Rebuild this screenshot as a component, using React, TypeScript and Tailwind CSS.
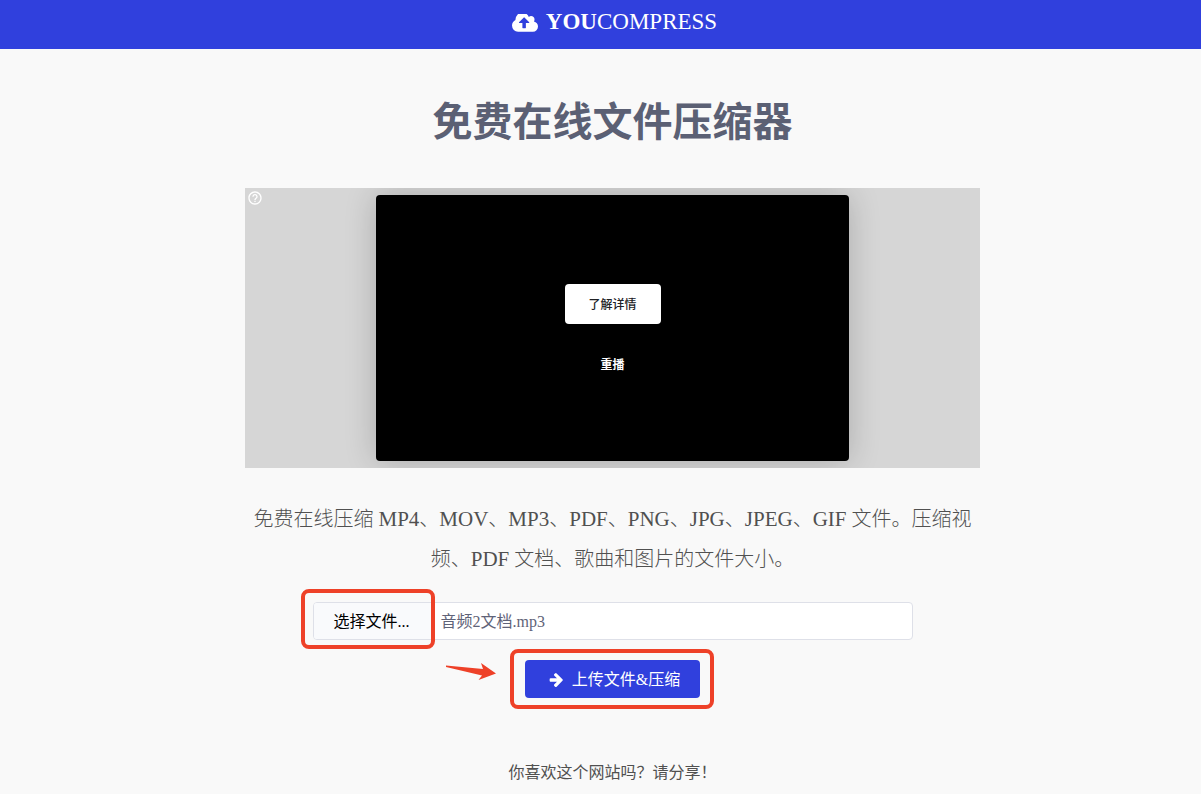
import type { ReactNode } from "react";

function CloudUploadIcon() {
  return (
    <svg aria-hidden="true" width="26" height="18" viewBox="0 256 1920 1280" fill="currentColor">
      <path d="M1280 864q0-14-9-23l-352-352q-9-9-23-9t-23 9l-351 351q-10 12-10 24 0 14 9 23t23 9h224v352q0 13 9.5 22.5t22.5 9.5h192q13 0 22.5-9.5t9.5-22.5v-352h224q13 0 22.5-9.5t9.5-22.5zm640 288q0 159-112.5 271.5t-271.5 112.5h-1088q-185 0-316.5-131.5t-131.5-316.5q0-130 70-240t188-165q-2-30-2-43 0-212 150-362t362-150q156 0 285.5 87t188.5 231q71-62 166-62 106 0 181 75t75 181q0 76-41 138 130 31 213.5 135.5t83.5 238.5z" />
    </svg>
  );
}

function ArrowRightIcon() {
  return (
    <svg aria-hidden="true" width="15" height="16" viewBox="0 64 1536 1792" fill="currentColor">
      <path d="M1472 960q0 54-37 91l-651 651q-39 37-91 37-51 0-90-37l-75-75q-38-38-38-91t38-91l293-293h-704q-52 0-84.5-37.5t-32.5-90.5v-128q0-53 32.5-90.5t84.5-37.5h704l-293-294q-38-36-38-90t38-90l75-75q38-38 90-38 53 0 91 38l651 651q37 35 37 90z" />
    </svg>
  );
}

function Highlight({ className }: { className: string }) {
  return (
    <span
      aria-hidden="true"
      className={`pointer-events-none absolute rounded-lg border-4 border-[#ee4128] ${className}`}
    />
  );
}

function Navbar() {
  return (
    <header className="flex h-[49px] justify-center bg-[#3040dd] pb-1 pl-7">
      <a href="#" className="flex items-center gap-2 text-[23px] leading-8 text-white">
        <CloudUploadIcon />
        <span className="pb-0.5">
          <strong>YOU</strong>COMPRESS
        </span>
      </a>
    </header>
  );
}

function AdPanel() {
  return (
    <section className="relative flex h-[280px] w-full justify-center overflow-hidden bg-[#d6d6d6] px-4 py-[7px] font-['Liberation_Sans','Noto_Sans_CJK_SC',sans-serif]">
      <svg
        className="absolute left-[2px] top-[2px]"
        width="16"
        height="16"
        viewBox="0 0 24 24"
        fill="#fff"
      >
        <path d="M11 18h2v-2h-2v2zm1-16C6.48 2 2 6.48 2 12s4.48 10 10 10 10-4.48 10-10S17.52 2 12 2zm0 18c-4.41 0-8-3.59-8-8s3.59-8 8-8 8 3.59 8 8-3.59 8-8 8zm0-14c-2.21 0-4 1.79-4 4h2c0-1.1.9-2 2-2s2 .9 2 2c0 2-3 1.75-3 5h2c0-2.25 3-2.5 3-5 0-2.21-1.79-4-4-4z" />
      </svg>
      <div className="flex w-full max-w-[473px] flex-col items-center rounded bg-black pt-[89px] shadow-[0_0_32px_rgba(0,0,0,0.2)]">
        <button className="h-10 w-24 rounded bg-white pt-0.5 text-xs font-medium text-[#202124]">
          了解详情
        </button>
        <button className="mt-[33px] text-xs font-bold text-white">重播</button>
      </div>
    </section>
  );
}

function FilePicker({ children }: { children: ReactNode }) {
  return (
    <div className="relative w-full max-w-[600px]">
      <input id="file" type="file" className="sr-only" />
      <label
        htmlFor="file"
        className="flex h-[38px] cursor-pointer overflow-hidden rounded border border-[#dee0e8] bg-white leading-[38px]"
      >
        <span className="w-[118px] border-r border-[#dee0e8] bg-[#f9fafc] pl-5 text-black">
          选择文件...
        </span>
        <span className="pl-[9px] text-[#5f6378]">{children}</span>
      </label>
      <Highlight className="-left-3 -top-[13px] h-[60px] w-[134px]" />
    </div>
  );
}

// Latin names sit slightly larger beside the CJK text
function Latin({ children }: { children: ReactNode }) {
  return <span className="text-[21px] leading-none">{children}</span>;
}

export default function App() {
  return (
    <div
      lang="zh-CN"
      className="min-h-screen bg-[#f9f9f9] font-['Liberation_Serif','Noto_Sans_CJK_SC',serif] text-base text-[#505050]"
    >
      <Navbar />
      <main className="flex flex-col items-center pl-6">
        <div className="flex w-full max-w-[735px] flex-col items-center">
          <h1 className="mt-[50px] text-[40px] font-bold leading-[48px] text-[#5b6074]">
            免费在线文件压缩器
          </h1>
          <div className="mt-[41px] w-full">
            <AdPanel />
          </div>
          <p className="mt-[31px] text-center text-xl font-light leading-10">
            免费在线压缩 <Latin>MP4</Latin>、<Latin>MOV</Latin>、<Latin>MP3</Latin>、
            <Latin>PDF</Latin>、<Latin>PNG</Latin>、<Latin>JPG</Latin>、<Latin>JPEG</Latin>、
            <Latin>GIF</Latin> 文件。压缩视
            <br />
            频、<Latin>PDF</Latin> 文档、歌曲和图片的文件大小。
          </p>
          <form
            className="mt-[23px] flex w-full flex-col items-center gap-5"
            onSubmit={(e) => e.preventDefault()}
          >
            <FilePicker>音频2文档.mp3</FilePicker>
            <div className="relative">
              <button
                type="submit"
                className="flex h-[38px] items-center gap-2 rounded bg-[#3040dd] pl-6 pr-5 pt-0.5 text-white"
              >
                <ArrowRightIcon />
                上传文件&amp;压缩
              </button>
              <Highlight className="-left-[15px] -right-[14px] -top-[11px] h-[60px]" />
              {/* pointer from the picker to the submit button */}
              <svg
                aria-hidden="true"
                className="pointer-events-none absolute -left-20 top-0"
                width="54"
                height="24"
                viewBox="0 0 54 24"
                fill="#ee4128"
              >
                <path d="M1 5.5 38 9 36 3 51 13.5 33.5 20 37 15.5 1 7Z" />
              </svg>
            </div>
          </form>
          <p className="mt-[63px] leading-6">你喜欢这个网站吗？请分享！</p>
        </div>
      </main>
    </div>
  );
}
